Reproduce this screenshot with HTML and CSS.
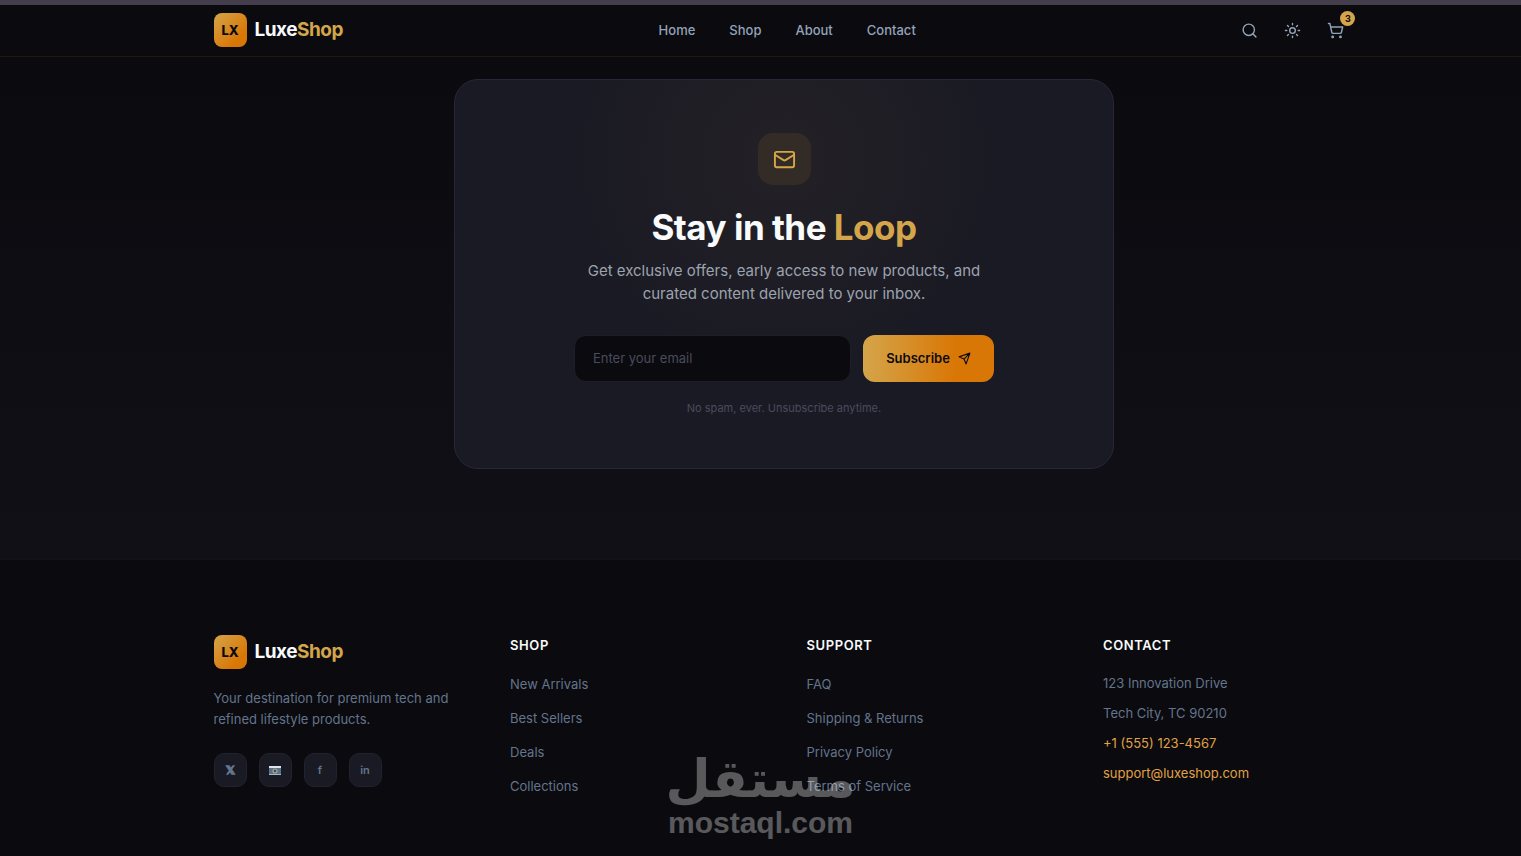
FILE: index.html
```
<!DOCTYPE html>
<html lang="en">
<head>
<meta charset="utf-8">
<title>LuxeShop</title>
<meta name="viewport" content="width=device-width, initial-scale=1">
<link rel="stylesheet" href="styles.css">
</head>

<body>

<header class="header">
  <div class="container header__inner">
    <a href="#home" class="brand">
      <span class="brand__mark">LX</span>
      <span class="brand__name">Luxe<em>Shop</em></span>
    </a>
    <nav class="nav">
      <a href="#home" class="nav__a">Home</a>
      <a href="#shop" class="nav__a">Shop</a>
      <a href="#about" class="nav__a">About</a>
      <a href="#contact" class="nav__a">Contact</a>
    </nav>
    <div class="actions">
      <button type="button" class="actions__btn" aria-label="Search">
        <svg viewBox="0 0 24 24"><circle cx="11" cy="11" r="8"/><path d="m21 21-4.35-4.35"/></svg>
      </button>
      <button type="button" class="actions__btn" aria-label="Toggle theme">
        <svg viewBox="0 0 24 24"><circle cx="12" cy="12" r="4"/><path d="M12 2v2M12 20v2M4.93 4.93l1.41 1.41M17.66 17.66l1.41 1.41M2 12h2M20 12h2M6.34 17.66l-1.41 1.41M19.07 4.93l-1.41 1.41"/></svg>
      </button>
      <button type="button" class="actions__btn" aria-label="Cart">
        <svg viewBox="0 0 24 24"><circle cx="8" cy="21" r="1"/><circle cx="19" cy="21" r="1"/><path d="M2.05 2.05h2l2.66 12.42a2 2 0 0 0 2 1.58h9.78a2 2 0 0 0 1.95-1.57l1.65-7.43H5.12"/></svg>
        <span class="actions__badge">3</span>
      </button>
    </div>
  </div>
</header>

<main class="newsletter">
  <section class="card">
    <div class="card__icon">
      <svg viewBox="0 0 24 24"><rect x="2" y="4" width="20" height="16" rx="2"/><path d="m22 7-8.97 5.7a1.94 1.94 0 0 1-2.06 0L2 7"/></svg>
    </div>
    <h2 class="card__title">Stay in the <em>Loop</em></h2>
    <p class="card__p">Get exclusive offers, early access to new products, and curated content delivered to your inbox.</p>
    <form class="form">
      <input type="email" class="form__input" placeholder="Enter your email" aria-label="Email address">
      <button type="submit" class="form__btn">
        Subscribe
        <svg viewBox="0 0 24 24"><path d="m22 2-7 20-4-9-9-4ZM22 2 11 13"/></svg>
      </button>
    </form>
    <p class="card__note">No spam, ever. Unsubscribe anytime.</p>
  </section>
</main>

<footer class="footer">
  <div class="container footer__grid">
    <div class="footer__col">
      <a href="#home" class="brand">
        <span class="brand__mark">LX</span>
        <span class="brand__name">Luxe<em>Shop</em></span>
      </a>
      <p class="footer__p">Your destination for premium tech and refined lifestyle products.</p>
      <div class="social">
        <a href="#x" class="social__a social__a--x" aria-label="X">𝕏</a>
        <a href="#instagram" class="social__a" aria-label="Instagram">
          <svg viewBox="0 0 12 9"><path fill="#dbe7ee" d="M0 0h12v2H0z"/><path fill="#5d7281" d="M0 2h12v6H0z"/><circle cx="6" cy="5" r="2.5" fill="#b2a99f"/><circle cx="6" cy="5" r="1.4" fill="#34536c"/><path fill="#9fb9c8" d="M0 8h12v1H0z"/></svg>
        </a>
        <a href="#facebook" class="social__a" aria-label="Facebook">f</a>
        <a href="#linkedin" class="social__a" aria-label="LinkedIn">in</a>
      </div>
    </div>
    <div class="footer__col">
      <h3 class="footer__title">Shop</h3>
      <ul class="links">
        <li><a href="#new">New Arrivals</a></li>
        <li><a href="#best">Best Sellers</a></li>
        <li><a href="#deals">Deals</a></li>
        <li><a href="#collections">Collections</a></li>
      </ul>
    </div>
    <div class="footer__col">
      <h3 class="footer__title">Support</h3>
      <ul class="links">
        <li><a href="#faq">FAQ</a></li>
        <li><a href="#shipping">Shipping &amp; Returns</a></li>
        <li><a href="#privacy">Privacy Policy</a></li>
        <li><a href="#terms">Terms of Service</a></li>
      </ul>
    </div>
    <div class="footer__col">
      <h3 class="footer__title">Contact</h3>
      <address class="contact">
        <p>123 Innovation Drive</p>
        <p>Tech City, TC 90210</p>
        <p><a href="tel:+15551234567">+1 (555) 123-4567</a></p>
        <p><a href="mailto:support@luxeshop.com">support@luxeshop.com</a></p>
      </address>
    </div>
  </div>
</footer>

<div class="watermark">
  <span class="watermark__ar" lang="ar" dir="rtl">مستقل</span>
  <span class="watermark__en">mostaql.com</span>
</div>

</body>
</html>
```
FILE: styles.css
```
/* reset */
*,*::before,*::after{box-sizing:border-box;}
body,div,ul,li,h2,h3,p,form,input,button{margin:0;padding:0;}
address,em{font-style:normal;}
ul{list-style:none;}
a{color:inherit;text-decoration:none;}
button,input{font:inherit;border:0;}
svg{display:block;fill:none;stroke:currentColor;stroke-width:2;stroke-linecap:round;stroke-linejoin:round;}

/* page */
:root {
  --bg:#0a0a0f;
  --panel:#1a1a24;
  --gold:#d4a54a;
  --orange:#d97706;
  --text:#f8fafc;
  --muted:#94a3b8;
  --dim:#64748b;
  --shift:47px;
}

html{font-family:Inter,sans-serif;font-size:13px;background-color:var(--bg);}
body{position:relative;min-height:100vh;color:var(--text);line-height:20px;}
.container{max-width:1141px;margin:0 auto;}

/* brand */
.brand{display:inline-flex;align-items:center;gap:8px;}
.brand__mark{display:flex;align-items:center;justify-content:center;width:33px;height:34px;border-radius:8px;background:linear-gradient(135deg,var(--gold),var(--orange) 75%);color:var(--bg);font-weight:800;}
.brand__name{font-size:19px;font-weight:700;letter-spacing:-.5px;}
.brand__name em{color:var(--gold);}

/* header */
.header{border-top:5px solid #443d4b;border-bottom:1px solid #21180f;padding-left:var(--shift);}
.header__inner{display:flex;align-items:center;justify-content:space-between;height:51px;padding-bottom:1px;}
.nav{display:flex;gap:34px;}
.nav__a{font-weight:500;color:var(--muted);}
.actions{display:flex;gap:6px;}
.actions__btn{position:relative;display:flex;align-items:center;justify-content:center;width:37px;height:38px;background:none;color:var(--muted);}
.actions__btn svg{width:17px;height:17px;}
.actions__badge{position:absolute;top:0;right:-1px;width:15px;height:15px;border-radius:50%;background-color:var(--gold);color:var(--bg);font-size:9px;font-weight:700;line-height:15px;text-align:center;}

/* newsletter */
.newsletter{padding:22px 0 90px var(--shift);background:linear-gradient(#0a0a0f,#101016);}
.card{max-width:660px;margin:0 auto;padding:53px 40px 50px;border:1px solid #27273a;border-radius:24px;background:radial-gradient(circle at 50% 80px,rgba(212,165,74,.05),transparent 220px) var(--panel);text-align:center;}
.card__icon{display:flex;align-items:center;justify-content:center;width:53px;height:52px;margin:0 auto 22px;border-radius:15px;background-color:#332c26;color:var(--gold);}
.card__icon svg{width:23px;height:23px;}
.card__title{font-size:35px;font-weight:700;line-height:40px;letter-spacing:-.5px;}
.card__title em{color:var(--gold);}
.card__p{max-width:420px;margin:12px auto 30px;font-size:15px;line-height:23px;color:#9ca3af;}
.form{display:flex;gap:12px;max-width:420px;margin:0 auto;}
.form__input{flex:1;min-width:0;height:47px;padding:0 18px 2px;border:1px solid #1e1e28;border-radius:12px;background-color:var(--bg);color:var(--text);}
.form__input::placeholder{color:#4b4b5c;}
.form__btn{display:flex;align-items:center;justify-content:center;gap:8px;width:131px;height:47px;padding-bottom:1px;border-radius:12px;background:linear-gradient(90deg,var(--gold),var(--orange) 70%);color:var(--bg);font-weight:600;}
.form__btn svg{width:13px;height:13px;}
.card__note{margin-top:16px;font-size:11px;color:#4b4b5c;}

/* footer */
.footer{padding:75px 0 46px var(--shift);border-top:1px solid #13131a;}
.footer__grid{display:grid;grid-template-columns:repeat(4,1fr);gap:45px;}
.footer__p{margin:19px 0 23px;line-height:21px;color:var(--dim);}
.footer__title{font-size:13px;font-weight:600;line-height:20px;letter-spacing:.6px;text-transform:uppercase;}
.links{margin-top:19px;}
.links li{color:var(--dim);}
.links li+li{margin-top:14px;}
.contact{margin-top:18px;color:var(--dim);}
.contact p+p{margin-top:10px;}
.contact a{color:#e0a244;}
.social{display:flex;gap:12px;}
.social__a{display:flex;align-items:center;justify-content:center;width:33px;height:34px;border:1px solid #22222c;border-radius:10px;background-color:var(--panel);color:var(--dim);font-size:11px;font-weight:600;}
.social__a svg{width:12px;height:9px;stroke:none;}
.social__a--x{-webkit-text-stroke:1px currentColor;}

/* watermark */
.watermark{position:absolute;left:50%;bottom:16px;transform:translateX(-50%);color:#fff;opacity:.32;text-align:center;pointer-events:none;}
.watermark__ar{display:block;font-family:"DejaVu Sans",sans-serif;font-size:52px;font-weight:700;line-height:54px;}
.watermark__en{display:block;font-family:"Liberation Sans",sans-serif;font-size:30px;font-weight:700;line-height:34px;}
```
